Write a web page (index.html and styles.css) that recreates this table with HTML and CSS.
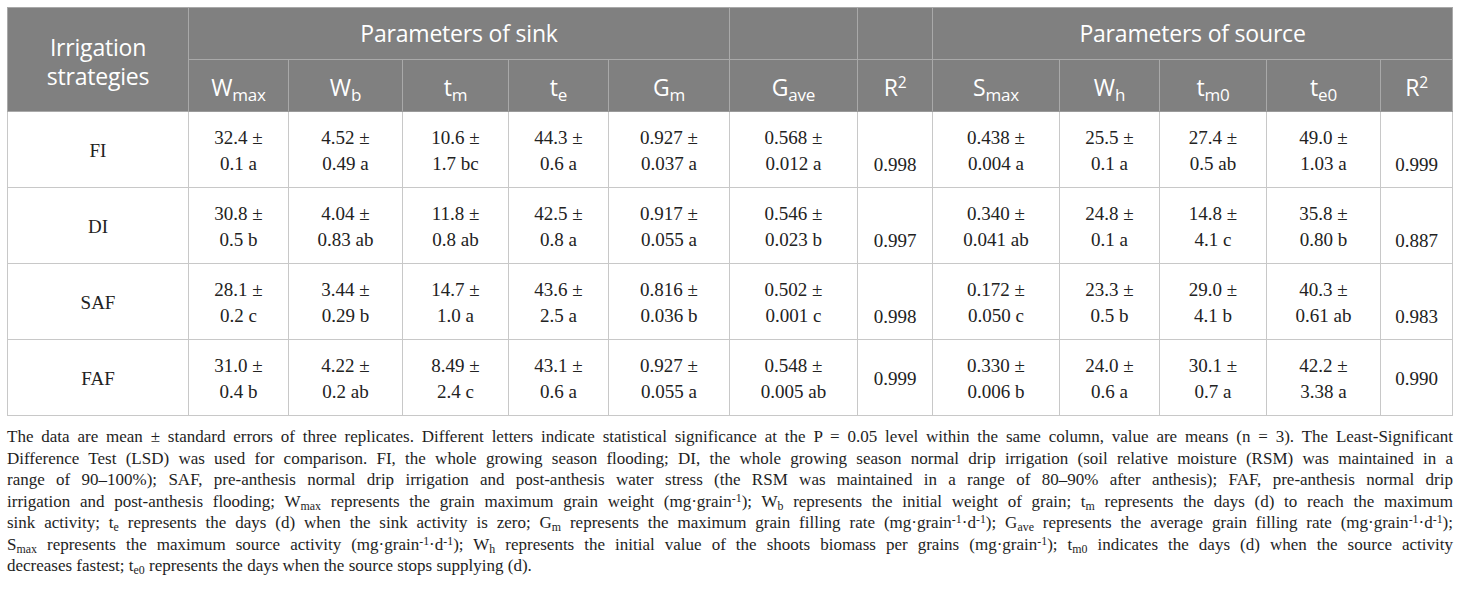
FILE: index.html
```html
<!DOCTYPE html>
<html>
<head>
<meta charset="utf-8">
<link rel="stylesheet" href="styles.css">
</head>
<body>
<div class="page">
<table class="data">
<colgroup>
<col class="c-strat"><col class="c-wmax"><col class="c-wb"><col class="c-tm"><col class="c-te"><col class="c-gm"><col class="c-gave"><col class="c-r2a"><col class="c-smax"><col class="c-wh"><col class="c-tm0"><col class="c-te0"><col class="c-r2b">
</colgroup>
<thead>
<tr class="h1">
<th rowspan="2" class="strat">Irrigation<br>strategies</th>
<th colspan="5">Parameters of sink</th>
<th></th>
<th></th>
<th colspan="5">Parameters of source</th>
</tr>
<tr class="h2">
<th>W<sub>max</sub></th>
<th>W<sub>b</sub></th>
<th>t<sub>m</sub></th>
<th>t<sub>e</sub></th>
<th>G<sub>m</sub></th>
<th>G<sub>ave</sub></th>
<th>R<sup>2</sup></th>
<th>S<sub>max</sub></th>
<th>W<sub>h</sub></th>
<th>t<sub>m0</sub></th>
<th>t<sub>e0</sub></th>
<th>R<sup>2</sup></th>
</tr>
</thead>
<tbody>
<tr>
<td>FI</td>
<td>32.4 ±<br>0.1 a</td><td>4.52 ±<br>0.49 a</td><td>10.6 ±<br>1.7 bc</td><td>44.3 ±<br>0.6 a</td><td>0.927 ±<br>0.037 a</td><td>0.568 ±<br>0.012 a</td>
<td class="low">0.998</td>
<td>0.438 ±<br>0.004 a</td><td>25.5 ±<br>0.1 a</td><td>27.4 ±<br>0.5 ab</td><td>49.0 ±<br>1.03 a</td>
<td class="low">0.999</td>
</tr>
<tr>
<td>DI</td>
<td>30.8 ±<br>0.5 b</td><td>4.04 ±<br>0.83 ab</td><td>11.8 ±<br>0.8 ab</td><td>42.5 ±<br>0.8 a</td><td>0.917 ±<br>0.055 a</td><td>0.546 ±<br>0.023 b</td>
<td class="low">0.997</td>
<td>0.340 ±<br>0.041 ab</td><td>24.8 ±<br>0.1 a</td><td>14.8 ±<br>4.1 c</td><td>35.8 ±<br>0.80 b</td>
<td class="low">0.887</td>
</tr>
<tr>
<td>SAF</td>
<td>28.1 ±<br>0.2 c</td><td>3.44 ±<br>0.29 b</td><td>14.7 ±<br>1.0 a</td><td>43.6 ±<br>2.5 a</td><td>0.816 ±<br>0.036 b</td><td>0.502 ±<br>0.001 c</td>
<td class="low">0.998</td>
<td>0.172 ±<br>0.050 c</td><td>23.3 ±<br>0.5 b</td><td>29.0 ±<br>4.1 b</td><td>40.3 ±<br>0.61 ab</td>
<td class="low">0.983</td>
</tr>
<tr>
<td>FAF</td>
<td>31.0 ±<br>0.4 b</td><td>4.22 ±<br>0.2 ab</td><td>8.49 ±<br>2.4 c</td><td>43.1 ±<br>0.6 a</td><td>0.927 ±<br>0.055 a</td><td>0.548 ±<br>0.005 ab</td>
<td>0.999</td>
<td>0.330 ±<br>0.006 b</td><td>24.0 ±<br>0.6 a</td><td>30.1 ±<br>0.7 a</td><td>42.2 ±<br>3.38 a</td>
<td>0.990</td>
</tr>
</tbody>
</table>
<div class="note">
<span class="ln">The data are mean ± standard errors of three replicates. Different letters indicate statistical significance at the P = 0.05 level within the same column, value are means (n = 3). The Least-Significant</span>
<span class="ln">Difference Test (LSD) was used for comparison. FI, the whole growing season flooding; DI, the whole growing season normal drip irrigation (soil relative moisture (RSM) was maintained in a</span>
<span class="ln">range of 90–100%); SAF, pre-anthesis normal drip irrigation and post-anthesis water stress (the RSM was maintained in a range of 80–90% after anthesis); FAF, pre-anthesis normal drip</span>
<span class="ln">irrigation and post-anthesis flooding; W<sub>max</sub> represents the grain maximum grain weight (mg·grain<sup>-1</sup>); W<sub>b</sub> represents the initial weight of grain; t<sub>m</sub> represents the days (d) to reach the maximum</span>
<span class="ln">sink activity; t<sub>e</sub> represents the days (d) when the sink activity is zero; G<sub>m</sub> represents the maximum grain filling rate (mg·grain<sup>-1</sup>·d<sup>-1</sup>); G<sub>ave</sub> represents the average grain filling rate (mg·grain<sup>-1</sup>·d<sup>-1</sup>);</span>
<span class="ln">S<sub>max</sub> represents the maximum source activity (mg·grain<sup>-1</sup>·d<sup>-1</sup>); W<sub>h</sub> represents the initial value of the shoots biomass per grains (mg·grain<sup>-1</sup>); t<sub>m0</sub> indicates the days (d) when the source activity</span>
<span class="ln last">decreases fastest; t<sub>e0</sub> represents the days when the source stops supplying (d).</span>
</div>
</div>
</body>
</html>
```
FILE: styles.css
```css
html, body {
  margin: 0;
  padding: 0;
  background: #ffffff;
}
.page {
  padding: 7px 8px 0 7px;
}
.data {
  width: 1446px;
  table-layout: fixed;
  border-collapse: collapse;
  border: 1px solid #c6c6c6;
}
.c-strat { width: 181px; }
.c-wmax { width: 100px; }
.c-wb { width: 114px; }
.c-tm { width: 106px; }
.c-te { width: 100px; }
.c-gm { width: 121px; }
.c-gave { width: 128px; }
.c-r2a { width: 75px; }
.c-smax { width: 127px; }
.c-wh { width: 100px; }
.c-tm0 { width: 107px; }
.c-te0 { width: 114px; }
.c-r2b { width: 72px; }

.data tr.h1,
.data tr.h2 {
  height: 52px;
}
.data tbody tr {
  height: 76px;
}
.data th {
  background: #808080;
  color: #ffffff;
  font-family: "Open Sans", "Noto Sans", sans-serif;
  font-weight: 400;
  font-size: 23px;
  line-height: 29px;
  border: 1px solid #a9a9a9;
  padding: 0;
  text-align: center;
  vertical-align: middle;
  letter-spacing: -0.2px;
}
.data tr.h2 th {
  padding-top: 3px;
  border-bottom: 1px solid #9a9a9a;
}
.data th.strat {
  padding-top: 4px;
}
.data th sub {
  font-size: 0.74em;
  vertical-align: -0.3em;
  line-height: 0;
}
.data th sup {
  font-size: 0.68em;
  vertical-align: 0.5em;
  line-height: 0;
}
.data td {
  font-family: "Liberation Serif", "Times New Roman", serif;
  font-size: 19px;
  line-height: 26px;
  color: #222222;
  text-align: center;
  vertical-align: middle;
  border: 1px solid #c8c8c8;
  padding: 3px 0 0 0;
}
.data td.low {
  vertical-align: bottom;
  padding-bottom: 9px;
}
.note {
  margin-top: 10px;
  width: 1446px;
  font-family: "Liberation Serif", "Times New Roman", serif;
  font-size: 17px;
  line-height: 21.5px;
  color: #1e1e1e;
}
.ln {
  display: block;
  text-align: justify;
  text-align-last: justify;
  white-space: nowrap;
}
.ln.last {
  text-align-last: left;
}
.note sub {
  font-size: 0.7em;
  vertical-align: -0.25em;
  line-height: 0;
}
.note sup {
  font-size: 0.7em;
  vertical-align: 0.45em;
  line-height: 0;
}
```
